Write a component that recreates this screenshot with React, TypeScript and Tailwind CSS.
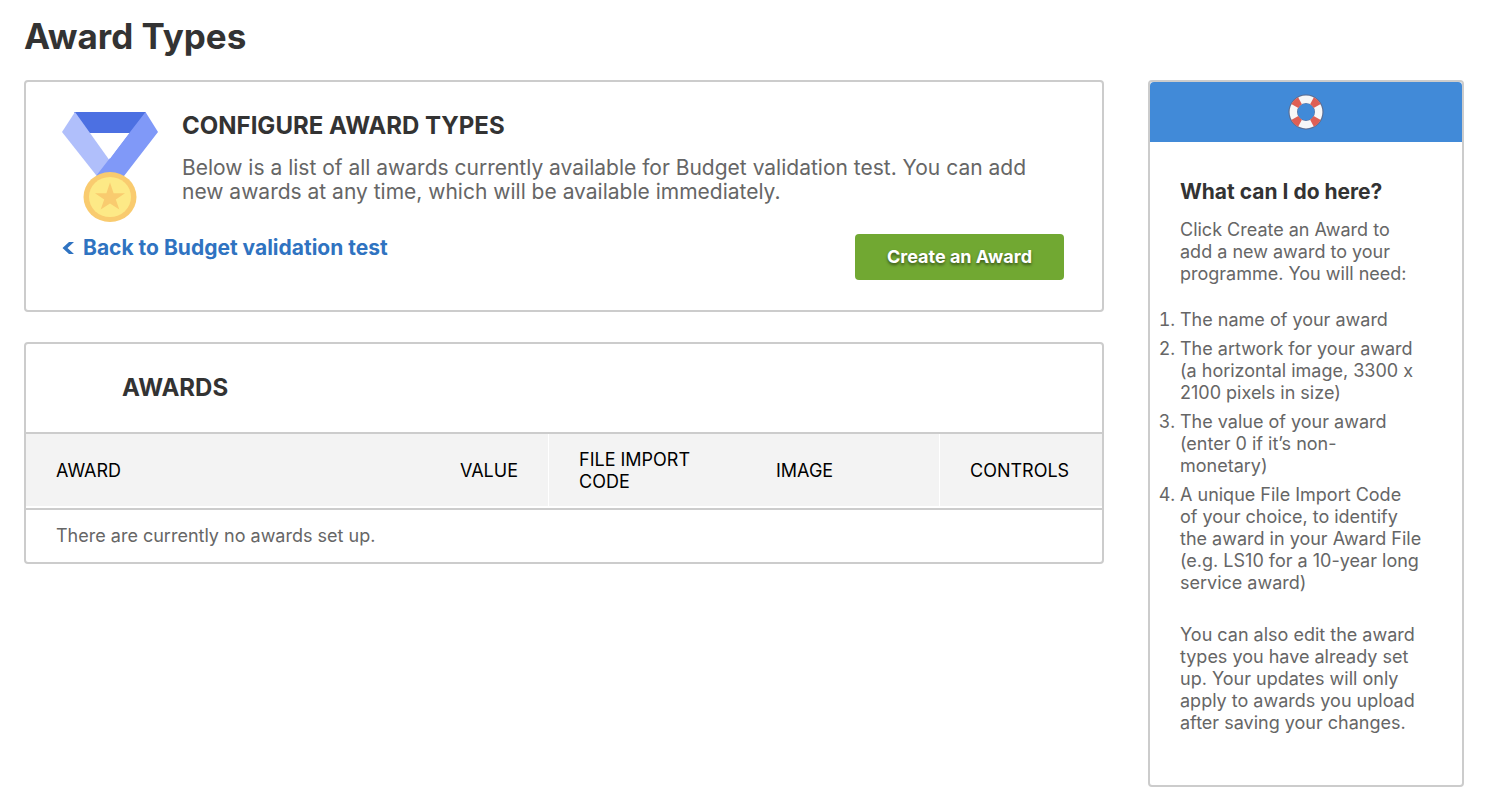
const helpSteps = [
    "The name of your award",
    "The artwork for your award (a horizontal image, 3300 x 2100 pixels in size)",
    "The value of your award (enter 0 if it’s non-monetary)",
    "A unique File Import Code of your choice, to identify the award in your Award File (e.g. LS10 for a 10-year long service award)",
]

const MedalIcon = () => (
    <svg width="96" height="110" viewBox="0 0 96 110" className="shrink-0" aria-hidden="true">
        <path d="M12 0H84L70 21H26Z" fill="#4c70e2" />
        <path d="M13 0L58 63H34L0 20Z" fill="#b0bffb" />
        <path d="M83.500 0L96 20L62 64H34L48 46Z" fill="#8099f8" />
        <path d="M29 21H67L48 46.500Z" fill="#fff" />
        <ellipse cx="48" cy="85" rx="26.500" ry="25" fill="#f9cb6f" />
        <ellipse cx="48" cy="85" rx="21" ry="20" fill="#fde986" />
        <path d="M48 70.500L51.600 81.200H63L53.800 87.500L57.300 97.500L48 91.500L38.700 97.500L42.200 87.500L33 81.200H44.400Z" fill="#f9cb6f" />
    </svg>
)

const LifebuoyIcon = () => (
    <svg width="36" height="36" viewBox="0 0 36 36" aria-hidden="true">
        <g fill="none">
            <circle cx="18" cy="18" r="15.500" stroke="#55688c" strokeWidth="3.600" opacity="0.7" />
            <circle cx="18" cy="18" r="13" stroke="#5d7095" strokeWidth="9" />
            <circle cx="18" cy="18" r="12.700" stroke="#f7f7f8" strokeWidth="7.400" />
            <g stroke="#de5f55" strokeWidth="8">
                <path d="M24 6.800A12.700 12.700 0 0 1 29.200 12" />
                <path d="M29.200 24A12.700 12.700 0 0 1 24 29.200" />
                <path d="M12 29.200A12.700 12.700 0 0 1 6.800 24" />
                <path d="M6.800 12A12.700 12.700 0 0 1 12 6.800" />
            </g>
        </g>
    </svg>
)

const ConfigureCard = () => {
    return (
        <section className="rounded border-2 border-[#cccccc] pt-[30px] pr-[38px] pb-[30px] pl-9">
            <div className="flex gap-6">
                <MedalIcon />
                <div>
                    <h2 className="text-2xl leading-7 font-bold text-[#333333]">CONFIGURE AWARD TYPES</h2>
                    <p className="mt-4 text-[21px] leading-6 text-[#666666]">
                        Below is a list of all awards currently available for Budget validation test. You can add new awards at any time, which will be available immediately.
                    </p>
                </div>
            </div>
            <div className="mt-3 flex items-start justify-between">
                <a href="#" className="flex items-center gap-[9px] text-[21px] leading-7 font-bold text-[#2f73c1]">
                    <svg width="12" height="14" viewBox="0 0 12 14" aria-hidden="true">
                        <path d="M7 1H12L5.500 7L12 13H7L0.500 7Z" fill="currentColor" />
                    </svg>
                    Back to Budget validation test
                </a>
                <button type="button" className="rounded bg-[#71a832] px-8 py-[11px] text-lg leading-6 font-bold text-white [text-shadow:0_2px_3px_rgba(0,0,0,0.5)]">
                    Create an Award
                </button>
            </div>
        </section>
    )
}

const AwardsCard = () => {
    return (
        <section className="mt-[30px] rounded border-2 border-[#cccccc]">
            <h2 className="border-b-2 border-[#cccccc] py-[30px] pl-24 text-2xl leading-7 font-bold text-[#333333]">AWARDS</h2>
            <table className="w-full table-fixed border-separate border-spacing-0 text-lg leading-[22px]">
                <colgroup>
                    <col />
                    <col className="w-[120px]" />
                    <col className="w-[197px]" />
                    <col className="w-[194px]" />
                    <col className="w-[162px]" />
                </colgroup>
                <thead className="text-black">
                    <tr className="h-[74px]">
                        <th scope="col" className="border-b-2 border-white bg-[#f3f3f3] pt-0.5 pl-[30px] text-left font-normal">AWARD</th>
                        <th scope="col" className="border-r border-b-2 border-white bg-[#f3f3f3] pt-0.5 pr-[30px] text-right font-normal">VALUE</th>
                        <th scope="col" className="border-b-2 border-white bg-[#f3f3f3] pt-0.5 pr-9 pl-[30px] text-left font-normal">FILE IMPORT CODE</th>
                        <th scope="col" className="border-r border-b-2 border-white bg-[#f3f3f3] pt-0.5 pl-[30px] text-left font-normal">IMAGE</th>
                        <th scope="col" className="border-b-2 border-white bg-[#f3f3f3] pt-0.5 pl-[30px] text-left font-normal">CONTROLS</th>
                    </tr>
                </thead>
                <tbody>
                    <tr>
                        <td colSpan={5} className="border-t-2 border-[#cccccc] px-[30px] py-[15px] text-[#666666]">There are currently no awards set up.</td>
                    </tr>
                </tbody>
            </table>
        </section>
    )
}

const HelpPanel = () => {
    return (
        <aside className="w-[316px] shrink-0 rounded border-2 border-[#cccccc]">
            <div className="flex h-[60px] items-center justify-center rounded-t-sm bg-[#418ad8]">
                <LifebuoyIcon />
            </div>
            <div className="pt-[38px] pr-10 pb-[51px] pl-[30px] text-lg leading-[22px] text-[#666666]">
                <h3 className="text-[21px] leading-6 font-bold text-[#333333]">What can I do here?</h3>
                <p className="mt-[15px]">Click Create an Award to add a new award to your programme. You will need:</p>
                <ol className="mt-6 flex list-outside list-decimal flex-col gap-[7px]">
                    {helpSteps.map((step) => (
                        <li key={step}>{step}</li>
                    ))}
                </ol>
                <p className="mt-[30px]">
                    You can also edit the award types you have already set up. Your updates will only apply to awards you upload after saving your changes.
                </p>
            </div>
        </aside>
    )
}

export default function App() {
    return (
        <div className="min-h-screen bg-white pt-3 pr-7 pb-6 pl-6 font-[Inter,sans-serif] [font-variant-ligatures:no-contextual]">
            <h1 className="text-[35px] leading-[48px] font-bold text-[#333333]">Award Types</h1>
            <div className="mt-5 flex items-start gap-11">
                <main className="min-w-0 flex-1">
                    <ConfigureCard />
                    <AwardsCard />
                </main>
                <HelpPanel />
            </div>
        </div>
    )
}
